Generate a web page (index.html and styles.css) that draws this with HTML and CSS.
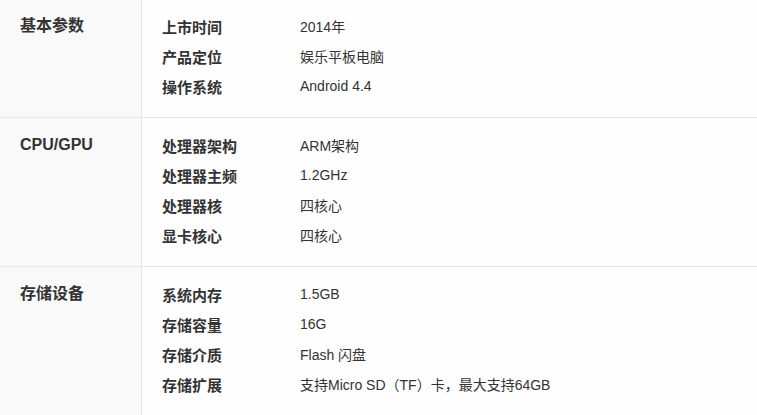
FILE: index.html
```html
<!DOCTYPE html>
<html lang="zh-CN">
    <head>
        <meta charset="UTF-8">
        <meta name="viewport" content="width=device-width, initial-scale=1.0">
        <title>参数</title>
        <link rel="stylesheet" href="styles.css">
    </head>
    <body>
        <div class="spec-table">
            <div class="spec-group">
                <div class="group-title">基本参数</div>
                <div class="group-body">
                    <div class="spec-row"><span class="spec-name">上市时间</span><span class="spec-value">2014年</span></div>
                    <div class="spec-row"><span class="spec-name">产品定位</span><span class="spec-value">娱乐平板电脑</span></div>
                    <div class="spec-row"><span class="spec-name">操作系统</span><span class="spec-value">Android 4.4</span></div>
                </div>
            </div>

            <div class="spec-group">
                <div class="group-title">CPU/GPU</div>
                <div class="group-body">
                    <div class="spec-row"><span class="spec-name">处理器架构</span><span class="spec-value">ARM架构</span></div>
                    <div class="spec-row"><span class="spec-name">处理器主频</span><span class="spec-value">1.2GHz</span></div>
                    <div class="spec-row"><span class="spec-name">处理器核</span><span class="spec-value">四核心</span></div>
                    <div class="spec-row"><span class="spec-name">显卡核心</span><span class="spec-value">四核心</span></div>
                </div>
            </div>

            <div class="spec-group">
                <div class="group-title">存储设备</div>
                <div class="group-body">
                    <div class="spec-row"><span class="spec-name">系统内存</span><span class="spec-value">1.5GB</span></div>
                    <div class="spec-row"><span class="spec-name">存储容量</span><span class="spec-value">16G</span></div>
                    <div class="spec-row"><span class="spec-name">存储介质</span><span class="spec-value">Flash 闪盘</span></div>
                    <div class="spec-row"><span class="spec-name">存储扩展</span><span class="spec-value">支持Micro SD（TF）卡，最大支持64GB</span></div>
                </div>
            </div>
        </div>
    </body>
</html>
```

FILE: styles.css
```css
body {
    margin: 0;
    background-color: #fefefe;
    color: #333;
    font-family: "Liberation Sans", Arial, "Noto Sans CJK SC", sans-serif;
    overflow: hidden;
}

.spec-group {
    display: flex;
    border-bottom: 1px solid #e5e5e5;
}

/* top edge of the first block is cut off in the design */
.spec-group:first-child {
    margin-top: -1px;
}

.group-title {
    width: 142px;
    flex-shrink: 0;
    box-sizing: border-box;
    padding: 12px 0 0 20px;
    background-color: #f9f9f9;
    border-right: 1px solid #e5e5e5;
    font-size: 16px;
    font-weight: bold;
    line-height: 30px;
}

.group-body {
    flex: 1;
    padding: 12px 20px 16px;
}

.spec-row {
    display: flex;
    height: 30px;
    align-items: center;
}

.spec-name {
    width: 138px;
    flex-shrink: 0;
    font-size: 15px;
    font-weight: bold;
}

.spec-value {
    font-size: 14px;
}
```
